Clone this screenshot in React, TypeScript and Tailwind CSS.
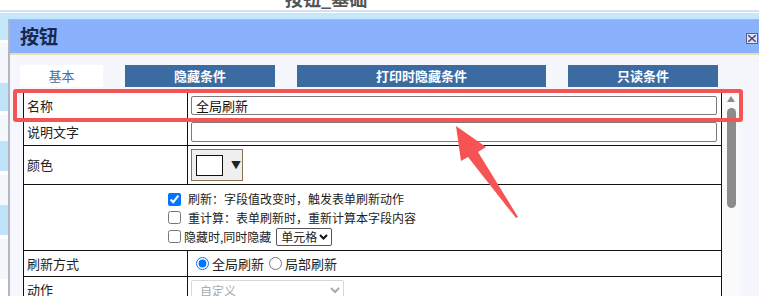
import React from "react";

const Row = ({ label, children, h }: { label: string; children?: React.ReactNode; h: string }) => (
  <div className={`flex border-b border-[#111] ${h}`}>
    <div className="w-[164px] shrink-0 border-r border-[#111] flex items-center pl-[3px] text-[13px] text-[#222]">
      {label}
    </div>
    <div className="flex-1 flex items-center">{children}</div>
  </div>
);

const App = () => {
  return (
    <div className="relative w-[759px] h-[296px] overflow-hidden bg-white font-['Noto_Sans_CJK_SC',sans-serif]">
      {/* page header (cut off) */}
      <div className="h-[10px] overflow-hidden pl-[285px]">
        <div className="-mt-[13px] text-[18px] leading-[22px] text-[#555] font-bold whitespace-nowrap">按钮_基础</div>
      </div>
      <div className="h-[2px] bg-[#d5e1f3]" />
      <div className="h-[1px] bg-white" />
      <div className="h-[6px] bg-[#c3e7fb]" />

      <div className="flex">
        {/* left page strip */}
        <div className="w-[8px] shrink-0 flex flex-col">
          <div className="h-[21px] bg-[#c3e7fb]" />
          <div className="h-[3px] bg-white" />
          <div className="h-[40px] bg-[#f4f8fc]" />
          <div className="h-[28px] bg-[#bfe4fa]" />
          <div className="h-[4px] bg-white" />
          <div className="h-[26px] bg-[#f4f8fc]" />
          <div className="h-[30px] bg-[#bfe4fa]" />
          <div className="h-[4px] bg-white" />
          <div className="h-[30px] bg-[#f4f8fc]" />
          <div className="h-[30px] bg-[#bfe4fa]" />
          <div className="h-[4px] bg-white" />
          <div className="h-[40px] bg-[#f4f8fc]" />
        </div>

        {/* dialog */}
        <div className="w-[760px] shrink-0 border-l-2 border-t border-[#b3b6c0] bg-[#f5f7fc]">
          <div className="h-[33px] bg-[#8ab1fb] flex items-center justify-between pl-[10px] pr-[10px]">
            <span className="text-[19px] font-bold text-[#18284c] whitespace-nowrap">按钮</span>
            <div className="w-[12px] h-[11px] border border-[#5e5e86] bg-[#dfe3f7] flex items-center justify-center mt-[3px]">
              <svg width="8" height="7" viewBox="0 0 8 7">
                <path d="M0 0 L8 7 M0 7 L8 0" stroke="#4a4a70" strokeWidth="1.4" />
              </svg>
            </div>
          </div>
          <div className="h-[2px] bg-[#e4e2a8]" />

          {/* tabs */}
          <div className="flex gap-[22px] pl-[10px] pt-[10px] text-[13px]">
            <div className="w-[83px] h-[22px] bg-white flex items-center justify-center text-[#4b6b99]">基本</div>
            <div className="w-[150px] h-[22px] bg-[#3c6ba2] flex items-center justify-center text-white font-bold">隐藏条件</div>
            <div className="w-[249px] h-[22px] bg-[#3c6ba2] flex items-center justify-center text-white font-bold">打印时隐藏条件</div>
            <div className="w-[150px] h-[22px] bg-[#3c6ba2] flex items-center justify-center text-white font-bold">只读条件</div>
          </div>

          {/* table + scrollbar */}
          <div className="flex pl-[13px] pt-[5px]">
            <div className="w-[699px] border-l border-r border-t border-[#111] bg-white">
              <Row label="名称" h="h-[26px]">
                <div className="ml-[3px] w-[526px] h-[19px] border border-[#7a7a7a] rounded-[2px] flex items-center pl-[4px] text-[13px] text-[#111]">
                  全局刷新
                </div>
              </Row>
              <Row label="说明文字" h="h-[27px]">
                <div className="ml-[3px] w-[526px] h-[20px] border border-[#7a7a7a] rounded-[2px]" />
              </Row>
              <Row label="颜色" h="h-[39px]">
                <div className="ml-[3px] w-[52px] h-[32px] border border-[#8b7453] bg-[#efefef] flex items-center pl-[4px] gap-[8px]">
                  <div className="w-[27px] h-[21px] border border-[#111] bg-white" />
                  <span className="text-[10px] text-[#222] leading-none">▼</span>
                </div>
              </Row>
              <div className="h-[66px] border-b border-[#111] pl-[141px] pt-[5px] text-[12px] text-[#222] flex flex-col">
                <label className="flex items-center h-[18px]">
                  <input type="checkbox" defaultChecked className="m-0 ml-[3px] w-[13px] h-[13px]" />
                  <span className="ml-[7px]">刷新：字段值改变时，触发表单刷新动作</span>
                </label>
                <label className="flex items-center h-[19px]">
                  <input type="checkbox" className="m-0 ml-[3px] w-[13px] h-[13px]" />
                  <span className="ml-[7px]">重计算：表单刷新时，重新计算本字段内容</span>
                </label>
                <label className="flex items-center h-[19px]">
                  <input type="checkbox" className="m-0 ml-[3px] w-[13px] h-[13px]" />
                  <span className="ml-[3px]">隐藏时,同时隐藏</span>
                  <span className="ml-[5px] w-[56px] h-[18px] border border-[#555] rounded-[2px] flex items-center pl-[4px] gap-[2px] bg-white whitespace-nowrap">
                    单元格
                    <svg width="9" height="6" viewBox="0 0 9 6">
                      <path d="M1 1 L4.5 4.5 L8 1" stroke="#111" strokeWidth="2" fill="none" />
                    </svg>
                  </span>
                </label>
              </div>
              <Row label="刷新方式" h="h-[26px]">
                <label className="flex items-center text-[13px] text-[#222]">
                  <input type="radio" name="r" defaultChecked className="m-0 ml-[8px] w-[13px] h-[13px]" />
                  <span className="ml-[3px]">全局刷新</span>
                </label>
                <label className="flex items-center text-[13px] text-[#222]">
                  <input type="radio" name="r" className="m-0 ml-[5px] w-[13px] h-[13px]" />
                  <span className="ml-[3px]">局部刷新</span>
                </label>
              </Row>
              <Row label="动作" h="h-[26px]">
                <select disabled className="ml-[3px] w-[153px] h-[20px] border border-[#d8d8d8] rounded-[2px] text-[12px] text-[#aaa] bg-white pl-[4px]">
                  <option>自定义</option>
                </select>
              </Row>
            </div>

            {/* scrollbar */}
            <div className="w-[18px] bg-[#fafafa] flex flex-col items-center pt-[4px]">
              <svg width="8" height="6" viewBox="0 0 8 6">
                <path d="M4 0 L8 6 L0 6 Z" fill="#8c8c8c" />
              </svg>
              <div className="mt-[6px] w-[9px] h-[100px] rounded-full bg-[#8c8c8c]" />
            </div>
          </div>
        </div>
      </div>

      {/* red annotation */}
      <div className="absolute left-[13px] top-[89px] w-[730px] h-[33px] border-[4px] border-[#f65454] rounded-[3px]" />
      <svg className="absolute left-0 top-0" width="759" height="296" viewBox="0 0 759 296">
        <polygon
          points="456,126 486,147 478,152 518,217 516,218 468,157 461,161"
          fill="#f65454"
        />
      </svg>
    </div>
  );
};

export default App;
